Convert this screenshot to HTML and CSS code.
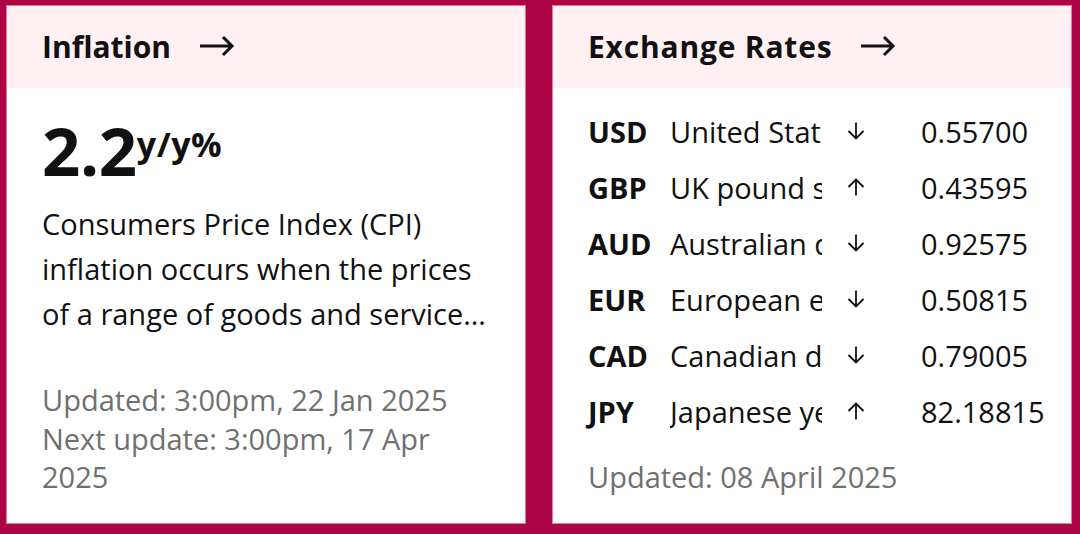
FILE: index.html
```html
<!DOCTYPE html>
<html lang="en">
<head>
<meta charset="utf-8">
<title>Inflation and Exchange Rates</title>
<link rel="stylesheet" href="styles.css">
</head>
<body>
<main class="board">
  <section class="card">
    <header class="card-head">
      <h2 class="card-title">Inflation</h2>
      <svg class="head-arrow" viewBox="0 0 36 22" aria-hidden="true"><path d="M1 11H33M24 2L33 11L24 20" fill="none" stroke="#111" stroke-width="3"/></svg>
    </header>
    <div class="card-body">
      <div class="big-figure">2.2<span class="unit">y/y%</span></div>
      <p class="desc">Consumers Price Index (CPI) inflation occurs when the prices of a range of goods and services we buy rise over time.</p>
      <p class="meta">Updated: 3:00pm, 22 Jan 2025<br>Next update: 3:00pm, 17 Apr 2025</p>
    </div>
  </section>
  <section class="card">
    <header class="card-head">
      <h2 class="card-title wide">Exchange Rates</h2>
      <svg class="head-arrow" viewBox="0 0 36 22" aria-hidden="true"><path d="M1 11H33M24 2L33 11L24 20" fill="none" stroke="#111" stroke-width="3"/></svg>
    </header>
    <div class="card-body rates-body">
      <ul class="rates">
        <li class="rate"><span class="code">USD</span><span class="name">United States dollar</span><svg class="dir" viewBox="0 0 18 18"><path d="M9 0.5V16.5M1.5 9L9 16.5L16.5 9" fill="none" stroke="#111" stroke-width="1.8"/></svg><span class="val">0.55700</span></li>
        <li class="rate"><span class="code">GBP</span><span class="name">UK pound sterling</span><svg class="dir" viewBox="0 0 18 18"><path d="M9 17.5V1.5M1.5 9L9 1.5L16.5 9" fill="none" stroke="#111" stroke-width="1.8"/></svg><span class="val">0.43595</span></li>
        <li class="rate"><span class="code">AUD</span><span class="name">Australian dollar</span><svg class="dir" viewBox="0 0 18 18"><path d="M9 0.5V16.5M1.5 9L9 16.5L16.5 9" fill="none" stroke="#111" stroke-width="1.8"/></svg><span class="val">0.92575</span></li>
        <li class="rate"><span class="code">EUR</span><span class="name">European euro</span><svg class="dir" viewBox="0 0 18 18"><path d="M9 0.5V16.5M1.5 9L9 16.5L16.5 9" fill="none" stroke="#111" stroke-width="1.8"/></svg><span class="val">0.50815</span></li>
        <li class="rate"><span class="code">CAD</span><span class="name">Canadian dollar</span><svg class="dir" viewBox="0 0 18 18"><path d="M9 0.5V16.5M1.5 9L9 16.5L16.5 9" fill="none" stroke="#111" stroke-width="1.8"/></svg><span class="val">0.79005</span></li>
        <li class="rate"><span class="code">JPY</span><span class="name">Japanese yen</span><svg class="dir" viewBox="0 0 18 18"><path d="M9 17.5V1.5M1.5 9L9 1.5L16.5 9" fill="none" stroke="#111" stroke-width="1.8"/></svg><span class="val">82.18815</span></li>
      </ul>
      <p class="meta">Updated: 08 April 2025</p>
    </div>
  </section>
</main>
</body>
</html>
```
FILE: styles.css
```css
* { box-sizing: border-box; }
html, body { margin: 0; padding: 0; }
body {
  background: #ad0444;
  font-family: "Open Sans", "Lato", sans-serif;
  color: #111;
  width: 1080px;
  height: 534px;
  overflow: hidden;
}
.board {
  display: flex;
  gap: 26px;
  padding: 5px 8px 10px 6px;
}
.card {
  width: 520px;
  height: 519px;
  background: #fff;
  border: 1px solid #e8799e;
  display: flex;
  flex-direction: column;
}
.card-head {
  height: 82px;
  background: #fff0f4;
  display: flex;
  align-items: center;
  gap: 28px;
  padding: 0 35px 2px;
}
.card-title {
  margin: 0;
  font-size: 30px;
  font-weight: 700;
}
.card-title.wide { letter-spacing: 0.8px; }
.head-arrow { width: 36px; height: 22px; }
.card-body {
  padding: 16px 35px 0;
  flex: 1;
  display: flex;
  flex-direction: column;
}
.big-figure {
  font-size: 67px;
  font-weight: 700;
  line-height: 80px;
  letter-spacing: -0.3px;
}
.unit {
  font-size: 34px;
  vertical-align: 19px;
  letter-spacing: 0.5px;
}
.desc {
  margin: 11px 0 0;
  font-size: 29px;
  line-height: 45px;
  display: -webkit-box;
  -webkit-line-clamp: 3;
  -webkit-box-orient: vertical;
  overflow: hidden;
}
.meta {
  margin: 45px 0 0;
  font-size: 29px;
  line-height: 38.5px;
  color: #707070;
}
.rates-body { padding-top: 15px; }
.rates {
  list-style: none;
  margin: 0;
  padding: 0;
}
.rate {
  display: grid;
  grid-template-columns: 82px 152px 25px 18px 1fr;
  align-items: center;
  height: 56px;
  font-size: 29px;
}
.code { font-weight: 700; grid-column: 1; }
.name { grid-column: 2; white-space: nowrap; overflow: hidden; }
.dir { grid-column: 4; width: 18px; height: 18px; }
.val { grid-column: 5; padding-left: 56px; }
.rates-body .meta { margin-top: 19px; }
```
